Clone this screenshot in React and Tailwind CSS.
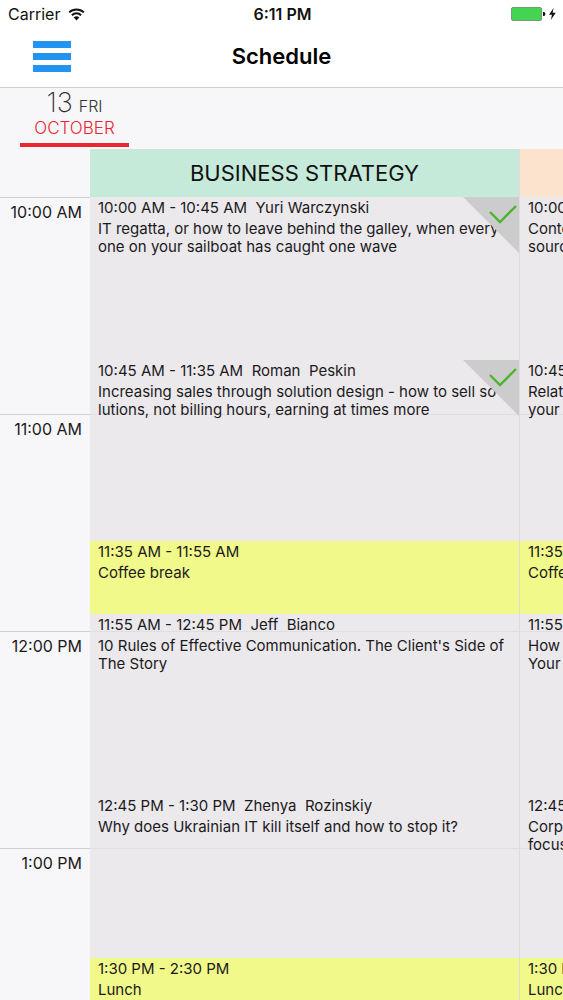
import { useState } from "react";
import clsx from "clsx";

const hours = ["10:00 AM", "11:00 AM", "12:00 PM", "1:00 PM"];

const tracks = [
	{
		title: "BUSINESS STRATEGY",
		color: "bg-[#c5ead9]",
		events: [
			{
				time: "10:00 AM - 10:45 AM",
				speaker: "Yuri Warczynski",
				title: "IT regatta, or how to leave behind the galley, when every\none on your sailboat has caught one wave",
				size: "h-[163px]",
				checked: true,
			},
			{
				time: "10:45 AM - 11:35 AM",
				speaker: "Roman  Peskin",
				title: "Increasing sales through solution design - how to sell so\nlutions, not billing hours, earning at times more",
				size: "h-[181px]",
				checked: true,
			},
			{ time: "11:35 AM - 11:55 AM", title: "Coffee break", size: "h-[73px]", isBreak: true },
			{
				time: "11:55 AM - 12:45 PM",
				speaker: "Jeff  Bianco",
				title: "10 Rules of Effective Communication. The Client's Side of\nThe Story",
				size: "h-[181px]",
			},
			{
				time: "12:45 PM - 1:30 PM",
				speaker: "Zhenya  Rozinskiy",
				title: "Why does Ukrainian IT kill itself and how to stop it?",
				size: "h-[163px]",
			},
			{ time: "1:30 PM - 2:30 PM", title: "Lunch", size: "h-[217px]", isBreak: true },
		],
	},
	{
		title: "MARKETING",
		color: "bg-[#fbe3cd]",
		events: [
			{ time: "10:00 AM - 10:45 AM", title: "Content as the main\nsource of clients", size: "h-[163px]" },
			{ time: "10:45 AM - 11:35 AM", title: "Relationships with\nyour customers", size: "h-[181px]" },
			{ time: "11:35 AM - 11:55 AM", title: "Coffee break", size: "h-[73px]", isBreak: true },
			{ time: "11:55 AM - 12:45 PM", title: "How to Present\nYour Company", size: "h-[181px]" },
			{ time: "12:45 PM - 1:30 PM", title: "Corporate brand:\nfocus on people", size: "h-[163px]" },
			{ time: "1:30 PM - 2:30 PM", title: "Lunch", size: "h-[217px]", isBreak: true },
		],
	},
];

function WifiIcon() {
	return (
		<svg width="17" height="13" viewBox="0 0 17 13" fill="none" stroke="#111" aria-hidden="true">
			<path d="M1.2 4.4a10.4 10.4 0 0 1 14.6 0" strokeWidth="2" />
			<path d="M3.9 7.2a6.6 6.6 0 0 1 9.2 0" strokeWidth="2" />
			<path d="M8.5 12.4 5.7 9.5a4 4 0 0 1 5.6 0Z" fill="#111" stroke="none" />
		</svg>
	);
}

function BatteryIcon() {
	return (
		<svg width="46" height="14" viewBox="0 0 46 14" aria-hidden="true">
			<rect x="0.5" y="0.5" width="30" height="13" rx="1.5" fill="#43d551" stroke="#6f9d74" />
			<path d="M32 5h.8a1.6 2 0 0 1 0 4H32z" fill="#111" />
			<path d="M42.6 1 38 7.7h3L39.8 13l5-7.2h-3.2z" fill="#111" />
		</svg>
	);
}

function StatusBar() {
	return (
		<div className="grid h-7 grid-cols-3 items-center pl-2 pr-1.5 text-[#111]">
			<div className="flex items-center gap-2 text-base">
				Carrier
				<WifiIcon />
			</div>
			<div className="text-center text-base font-semibold">6:11 PM</div>
			<div className="flex justify-end">
				<BatteryIcon />
			</div>
		</div>
	);
}

function NavBar() {
	return (
		<header className="grid h-[60px] grid-cols-[1fr_auto_1fr] items-center border-b border-[#cfced2] pb-0.5">
			<button type="button" aria-label="Menu" className="ml-[33px] flex w-[38px] flex-col gap-[5px]">
				<span className="h-[7px] bg-[#2294f0]" />
				<span className="h-[7px] bg-[#2294f0]" />
				<span className="h-[7px] bg-[#2294f0]" />
			</button>
			<h1 className="text-[22px] font-semibold text-black">Schedule</h1>
		</header>
	);
}

function DayTab() {
	return (
		<div className="flex h-[61px] shrink-0 items-start pl-5">
			<button
				type="button"
				className="flex h-[59px] w-[109px] flex-col items-center border-b-4 border-[#ea2632]">
				<span className="flex items-baseline gap-1.5 leading-[30px] text-[#333]">
					<span className="text-[27px] font-extralight">13</span>
					<span className="text-base font-light">FRI</span>
				</span>
				<span className="text-[17px] leading-5 font-light text-[#ea2632]">OCTOBER</span>
			</button>
		</div>
	);
}

function CheckCorner() {
	return (
		<svg className="absolute top-0 right-0 z-20" width="56" height="56" viewBox="0 0 56 56" aria-hidden="true">
			<path d="M0 0h56v56z" fill="#cdcccd" />
			<path d="m27 15 10 10L53 9" fill="none" stroke="#4cb52c" strokeWidth="2.4" />
		</svg>
	);
}

function EventCell({ event, selected, onToggle }) {
	return (
		<button
			type="button"
			onClick={onToggle}
			aria-pressed={selected}
			className={clsx(
				"relative flex w-full shrink-0 flex-col items-start px-2 text-left text-[15px] text-[#1b1a1c]",
				event.size,
				event.isBreak ? "bg-[#f0f98a]" : "bg-[#ebe9ec]"
			)}>
			<span className="z-10 mb-px leading-[22px] whitespace-pre">
				{event.time}
				{event.speaker ? `  ${event.speaker}` : ""}
			</span>
			<span className="z-10 leading-[18px] whitespace-pre">{event.title}</span>
			{selected ? <CheckCorner /> : null}
		</button>
	);
}

function Track({ track }) {
	const [checked, setChecked] = useState(track.events.map((event) => Boolean(event.checked)));

	const toggle = (index) => {
		setChecked(checked.map((value, i) => (i === index ? !value : value)));
	};

	return (
		<section className="w-[430px] shrink-0 border-r border-[#dddbdf]">
			<h2
				className={clsx(
					"flex h-12 items-center justify-center text-[22px] text-[#111]",
					track.color
				)}>
				{track.title}
			</h2>
			{track.events.map((event, index) => (
				<EventCell
					key={event.time}
					event={event}
					selected={checked[index]}
					onToggle={() => toggle(index)}
				/>
			))}
		</section>
	);
}

function App() {
	return (
		<div className="flex h-screen flex-col overflow-hidden bg-[#f7f6f9] font-['Inter',sans-serif]">
			<div className="shrink-0 bg-white">
				<StatusBar />
				<NavBar />
			</div>
			<DayTab />
			<main className="flex min-h-0 flex-1 items-start overflow-auto [scrollbar-width:none]">
				<div className="w-[90px] shrink-0 pt-12">
					{hours.map((hour) => (
						<div
							key={hour}
							className="h-[217px] border-t border-[#d0cfd3] pt-0.5 pr-2 text-right text-base text-[#1b1a1c]">
							{hour}
						</div>
					))}
				</div>
				<div className="relative flex">
					{tracks.map((track) => (
						<Track key={track.title} track={track} />
					))}
					{/* hour lines, above the cells but under their text */}
					<div className="pointer-events-none absolute inset-x-0 top-[49px]">
						{hours.map((hour) => (
							<div key={hour} className="h-[217px] border-b border-[#e0dee2]" />
						))}
					</div>
				</div>
			</main>
		</div>
	);
}

export default App;
